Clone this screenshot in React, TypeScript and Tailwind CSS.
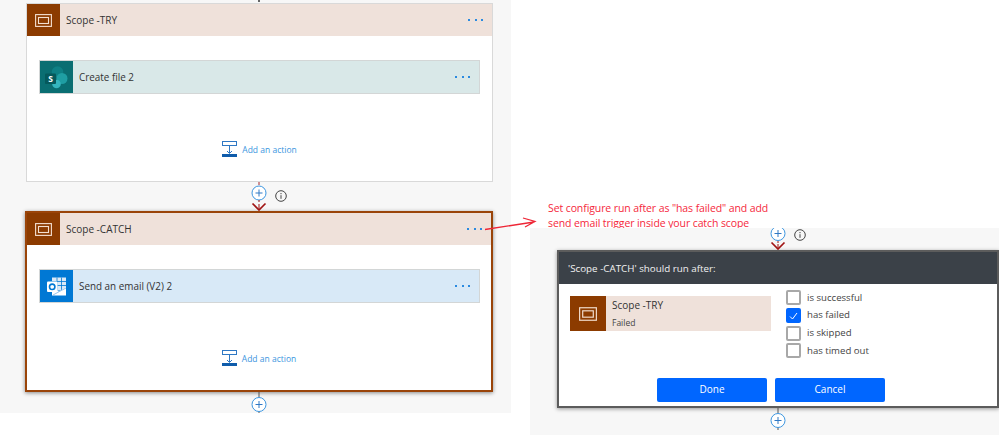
import React from "react";

const FONT = { fontFamily: '"Open Sans", "Noto Sans", sans-serif' };

function ScopeIcon({ w = 17, h = 13 }: { w?: number; h?: number }) {
  return (
    <svg width={w} height={h} viewBox="0 0 17 13" fill="none" stroke="#f3dfd0">
      <rect x="0.6" y="0.6" width="15.8" height="11.8" strokeWidth="1.1" />
      <rect x="3.5" y="3.5" width="10" height="6" strokeWidth="1.1" />
    </svg>
  );
}

function SharePointIcon() {
  return (
    <svg width="23" height="23" viewBox="0 0 23 23">
      <circle cx="12.5" cy="6" r="5.8" fill="#0e8085" />
      <circle cx="17" cy="12.500" r="5.500" fill="#1f9ea3" />
      <circle cx="11.500" cy="18" r="4.300" fill="#35b6bf" />
      <rect x="0" y="7.500" width="11" height="10.500" rx="1" fill="#05595c" />
      <text x="5.500" y="15.800" fontSize="8.500" fontWeight="700" fill="#fff" textAnchor="middle" fontFamily="Open Sans">S</text>
    </svg>
  );
}

function OutlookIcon() {
  return (
    <svg width="20" height="19" viewBox="0 0 20 19">
      <rect x="5" y="0.500" width="14" height="13" fill="#dbe9f6" />
      <path d="M5 4.500h14M5 8.500h14M10 0.500v13M14.500 0.500v13" stroke="#0078d4" strokeWidth="0.800" />
      <path d="M5 11l7 3.500L19 10v8.500H5z" fill="#fff" />
      <path d="M6 18l6.500-3.500L19 11" stroke="#7fb5e6" strokeWidth="0.800" fill="none" />
      <rect x="0" y="4.500" width="10.500" height="10.500" rx="1" fill="#fff" />
      <circle cx="5.200" cy="9.800" r="2.700" fill="none" stroke="#0078d4" strokeWidth="1.600" />
    </svg>
  );
}

function Dots() {
  return (
    <div className="flex gap-[4.500px]">
      <span className="h-[2px] w-[2px] bg-[#2a8ae0]" />
      <span className="h-[2px] w-[2px] bg-[#2a8ae0]" />
      <span className="h-[2px] w-[2px] bg-[#2a8ae0]" />
    </div>
  );
}

function AddAction({ className = "" }: { className?: string }) {
  return (
    <div className={`flex items-center justify-center gap-[5px] ${className}`}>
      <svg width="15" height="16" viewBox="0 0 15 16" fill="none">
        <rect x="0.500" y="0.500" width="14" height="4" stroke="#2f78c4" />
        <path d="M7.500 5v7M5 10l2.500 2.500L10 10" stroke="#2f78c4" />
        <rect x="0" y="13" width="15" height="3" fill="#0f5cab" />
      </svg>
      <span className="pt-[1px] text-[8.500px] leading-[12px] text-[#3c96e0]">Add an action</span>
    </div>
  );
}

function ScopeHeader({ title }: { title: string }) {
  return (
    <div className="flex h-[32px] items-center bg-[#efe1da]">
      <div className="flex h-full w-[33px] items-center justify-center bg-[#8c3b00]">
        <ScopeIcon />
      </div>
      <span className="ml-[6px] pt-[1px] text-[10px] text-[#333]">{title}</span>
      <div className="ml-auto mr-[9px]">
        <Dots />
      </div>
    </div>
  );
}

function ActionCard({ title, bg, iconBg, icon }: { title: string; bg: string; iconBg: string; icon: React.ReactNode }) {
  return (
    <div className={`ml-[12px] mt-[24px] flex h-[34px] w-[441px] items-center border border-[#d3d6d6] ${bg}`}>
      <div className={`flex h-full w-[33px] items-center justify-center ${iconBg}`}>{icon}</div>
      <span className="ml-[6px] pt-[1px] text-[9.900px] text-[#333]">{title}</span>
      <div className="ml-auto mr-[9px]">
        <Dots />
      </div>
    </div>
  );
}

function Connector({ h, top }: { h: number; top: "redIn" | "dark" | "clip" }) {
  return (
    <svg width="20" height={h} viewBox={`0 0 20 ${h}`} fill="none">
      {top === "redIn" && (
        <>
          <path d="M10 0v3" stroke="#a4262c" />
          <circle cx="10" cy="11" r="7" fill="#fff" stroke="#3c96e0" />
          <path d="M10 7.500v7M6.500 11h7" stroke="#2f78c4" />
          <path d="M10 18v2M10 22v5" stroke="#a01414" />
          <path d="M3.500 21.500l6.500 6.500 6.500-6.500" stroke="#a01414" strokeWidth="1.700" />
        </>
      )}
      {top === "clip" && (
        <>
          <circle cx="10" cy="5.500" r="7" fill="#fff" stroke="#3c96e0" />
          <path d="M10 2v7M6.500 5.500h7" stroke="#2f78c4" />
          <path d="M10 13v2M10 16v5" stroke="#a01414" />
          <path d="M3.500 14.500l6.500 6.500 6.500-6.500" stroke="#a01414" strokeWidth="1.700" />
        </>
      )}
      {top === "dark" && (
        <>
          <path d="M10 0v5M10 19v3" stroke="#555" />
          <circle cx="10" cy="12.500" r="7" fill="#fff" stroke="#3c96e0" />
          <path d="M10 9v7M6.500 12.500h7" stroke="#2f78c4" />
        </>
      )}
    </svg>
  );
}

function InfoIcon() {
  return (
    <svg width="12" height="12" viewBox="0 0 12 12" fill="none">
      <circle cx="6" cy="6" r="5.300" stroke="#444" />
      <path d="M6 5.200v3.600" stroke="#444" />
      <path d="M6 3v1.200" stroke="#444" />
    </svg>
  );
}

function Check({ label, checked }: { label: string; checked?: boolean }) {
  return (
    <div className="flex h-[17.700px] items-center">
      <div
        className={`flex h-[15px] w-[15px] items-center justify-center rounded-[2px] border-2 ${
          checked ? "border-[#0066ff] bg-[#0066ff]" : "border-[#a8a8a8] bg-white"
        }`}
      >
        {checked && (
          <svg width="9" height="8" viewBox="0 0 9 8" fill="none">
            <path d="M1 4.500l2.500 2.500L8 1" stroke="#fff" />
          </svg>
        )}
      </div>
      <span className="ml-[6px] text-[9.600px] text-[#444]">{label}</span>
    </div>
  );
}

export default function App() {
  return (
    <div className="relative flex h-[435px] w-[999px] overflow-hidden bg-white" style={FONT}>
      {/* Left canvas */}
      <div className="flex h-[413px] w-[511px] flex-col bg-[#f7f7f7]">
        <div className="ml-[258px] h-[2px] w-[2px] bg-[#666]" />
        <div className="ml-[26px] mt-[1px] h-[179px] w-[467px] border border-[#d9d9d9] bg-white">
          <ScopeHeader title="Scope -TRY" />
          <ActionCard title="Create file 2" bg="bg-[#d9e8e8]" iconBg="bg-[#0a6e72]" icon={<SharePointIcon />} />
          <AddAction className="mt-[47px]" />
        </div>
        <div className="relative ml-[249px] h-[29px] w-[20px]">
          <Connector h={29} top="redIn" />
          <div className="absolute left-[26px] top-[8px]">
            <InfoIcon />
          </div>
        </div>
        <div className="ml-[25px] h-[181px] w-[468px] border-2 border-[#9a4409] bg-white shadow-[0_1px_4px_rgba(0,0,0,0.45)]">
          <ScopeHeader title="Scope -CATCH" />
          <ActionCard title="Send an email (V2) 2" bg="bg-[#d8e9f7]" iconBg="bg-[#0078d4]" icon={<OutlookIcon />} />
          <AddAction className="mt-[47px]" />
        </div>
        <div className="ml-[249px] h-[21px] w-[20px] overflow-hidden">
          <Connector h={21} top="dark" />
        </div>
      </div>

      {/* Right column */}
      <div className="ml-[19px] flex w-[469px] flex-col">
        <div className="h-[228px] pl-[18px] pt-[201px] text-[10.500px] leading-[14.500px] tracking-[-0.1px] text-[#f5283c]">
          <div>Set configure run after as "has failed" and add</div>
          <div>send email trigger inside your catch scope</div>
        </div>
        <div className="h-[207px] bg-[#f7f7f7]">
          <div className="relative ml-[238px] h-[22px] w-[20px]">
            <Connector h={22} top="clip" />
            <div className="absolute left-[26px] top-[1px]">
              <InfoIcon />
            </div>
          </div>
          <div className="ml-[27px] h-[158px] w-[442px] border-2 border-[#5c5c5c] bg-white shadow-[0_1px_4px_rgba(0,0,0,0.4)]">
            <div className="flex h-[32px] items-center bg-[#3b4148] pl-[9px] pt-[2px] text-[9.800px] text-[#f2f2f2]">
              'Scope -CATCH' should run after:
            </div>
            <div className="flex">
              <div className="ml-[11px] mt-[12px] flex h-[35px] w-[201px] bg-[#efe1da]">
                <div className="flex h-full w-[36px] items-center justify-center bg-[#8c3b00]">
                  <ScopeIcon w={18} h={14} />
                </div>
                <div className="ml-[6px] flex flex-col pt-[2px]">
                  <span className="text-[10px] leading-[15px] text-[#333]">Scope -TRY</span>
                  <span className="mt-[4px] text-[8.500px] leading-[11px] text-[#444]">Failed</span>
                </div>
              </div>
              <div className="ml-[15px] mt-[5px] flex flex-col">
                <Check label="is successful" />
                <Check label="has failed" checked />
                <Check label="is skipped" />
                <Check label="has timed out" />
              </div>
            </div>
            <div className="ml-[98px] mt-[18px] flex gap-[8px]">
              <div className="flex h-[24px] w-[110px] items-center justify-center rounded-[2px] bg-[#0066ff] text-[10px] text-white">
                Done
              </div>
              <div className="flex h-[24px] w-[110px] items-center justify-center rounded-[2px] bg-[#0066ff] text-[10px] text-white">
                Cancel
              </div>
            </div>
          </div>
          <div className="ml-[238px] h-[27px] w-[20px] overflow-hidden">
            <Connector h={27} top="dark" />
          </div>
        </div>
      </div>

      {/* Annotation arrow lying over the panels */}
      <svg className="absolute left-[480px] top-[212px]" width="60" height="24" viewBox="0 0 60 24" fill="none">
        <path d="M5 17.500L54 10M43 6l12 3.500L45 15" stroke="#ee2636" strokeWidth="1.300" />
      </svg>
    </div>
  );
}
